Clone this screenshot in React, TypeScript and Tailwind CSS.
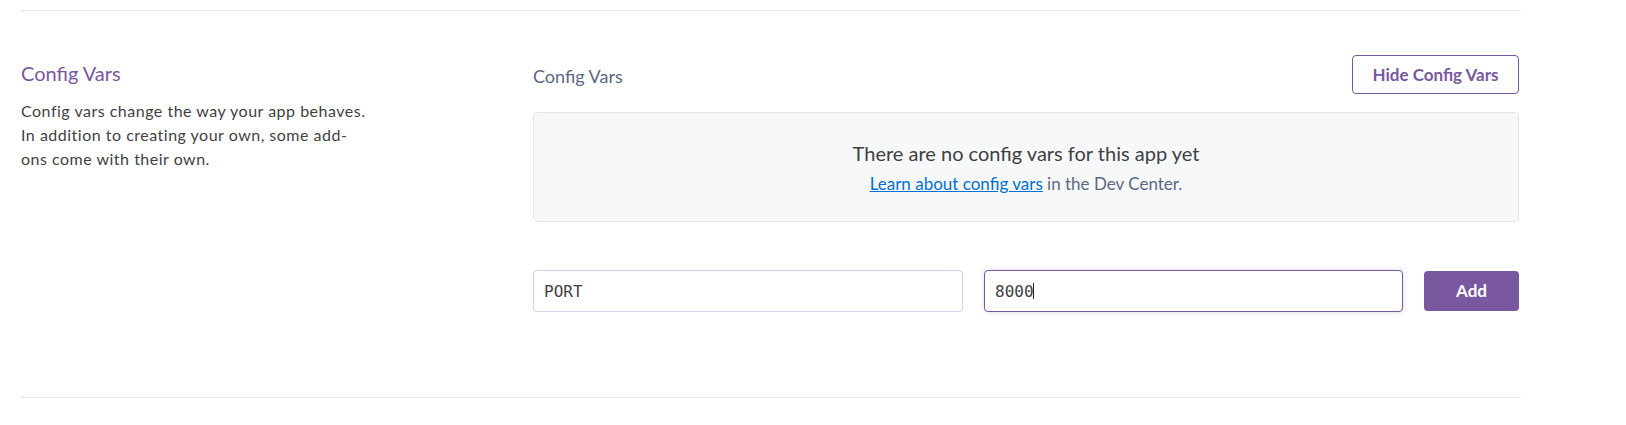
import React from 'react';

const font = {fontFamily: 'Lato, "Noto Sans", sans-serif'};

function ConfigVarsForm() {
    return (
        <div className="mt-[48px] flex items-center gap-[21px]">
            <input
                type="text"
                defaultValue="PORT"
                className="h-[42px] w-[430px] rounded-[4px] border border-[#cfd2e8] bg-white px-[10px] text-[16px] text-[#3f3f44] outline-none"
                style={{fontFamily: '"DejaVu Sans Mono", monospace'}}
            />
            <div className="relative">
                <input
                    type="text"
                    defaultValue="8000"
                    className="h-[42px] w-[419px] rounded-[4px] border border-[#79589f] bg-white px-[10px] text-[16px] text-[#3f3f44] shadow-[0_0_5px_rgba(121,88,159,0.25)] outline-none"
                    style={{fontFamily: '"DejaVu Sans Mono", monospace'}}
                />
                {/* caret */}
                <span className="pointer-events-none absolute left-[49px] top-[13px] h-[16px] w-px bg-[#222]"/>
            </div>
            <button
                type="button"
                className="h-[40px] w-[95px] rounded-[4px] bg-[#79589f] text-[17px] font-bold text-white"
            >
                Add
            </button>
        </div>
    );
}

export default function App() {
    return (
        <div className="min-h-screen bg-white pt-[10px]" style={font}>
            <div className="ml-[21px] flex w-[1500px] border-y border-[#e8e7f1]">
                {/* Left description */}
                <div className="w-[512px] shrink-0 pt-[48px]">
                    <h2 className="text-[20px] leading-[28px] text-[#79589f]">Config Vars</h2>
                    <p className="mt-[12px] text-[16px] leading-[24px] tracking-[0.5px] text-[#3f3f44]">
                        Config vars change the way your app behaves.<br/>
                        In addition to creating your own, some add-<br/>
                        ons come with their own.
                    </p>
                </div>

                {/* Right panel */}
                <div className="w-[986px] shrink-0 pt-[44px] pb-[85px]">
                    <div className="flex h-[39px] items-start justify-between">
                        <h3 className="mt-[9px] text-[18px] leading-[24px] text-[#596981]">Config Vars</h3>
                        <button
                            type="button"
                            className="h-[39px] w-[167px] rounded-[4px] border border-[#79589f] bg-white text-[17px] font-bold text-[#79589f]"
                        >
                            Hide Config Vars
                        </button>
                    </div>

                    <div className="mt-[18px] flex h-[110px] flex-col items-center rounded-[5px] border border-[#e3e5ea] bg-[#f7f8fa] pt-[28px]">
                        <p className="text-[20px] leading-[24px] text-[#3f3f44]">
                            There are no config vars for this app yet
                        </p>
                        <p className="mt-[8px] text-[17px] leading-[22px] text-[#596981]">
                            <a href="#" className="text-[#0070d2] underline">Learn about config vars</a> in the Dev Center.
                        </p>
                    </div>

                    <ConfigVarsForm/>
                </div>
            </div>
        </div>
    );
}
